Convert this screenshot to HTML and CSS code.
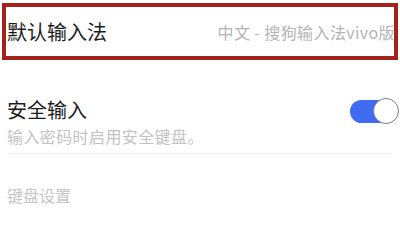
FILE: index.html
```html
<!DOCTYPE html>
<html lang="zh-CN">
<head>
<meta charset="utf-8">
<link rel="stylesheet" href="styles.css">
</head>
<body>
<div class="box">
  <span class="title">默认输入法</span>
  <span class="value">中文 - 搜狗输入法vivo版</span>
</div>
<div class="section">
  <div class="row">
    <div class="row-text">
      <div class="title">安全输入</div>
      <div class="sub">输入密码时启用安全键盘。</div>
    </div>
    <div class="toggle"><span class="knob"></span></div>
  </div>
  <div class="divider"></div>
  <div class="group">键盘设置</div>
</div>
</body>
</html>
```
FILE: styles.css
```css
html, body {
  margin: 0;
  padding: 0;
  background: #ffffff;
  font-family: "Noto Sans CJK SC", "Noto Sans", sans-serif;
  overflow: hidden;
}
.box {
  margin: 3px 2px 0;
  height: 49px;
  border: 4px solid #a3221d;
  display: flex;
  align-items: center;
  justify-content: space-between;
  padding: 0 0 0 1px;
  box-sizing: content-box;
}
.title {
  font-size: 20px;
  line-height: 24px;
  color: #1c1c1c;
}
.value {
  font-size: 16px;
  line-height: 20px;
  letter-spacing: 0.4px;
  color: #b4b4b4;
  margin-right: -1px;
  white-space: nowrap;
}
.section {
  padding: 0 8px 0 7px;
}
.row {
  display: flex;
  justify-content: space-between;
  align-items: center;
  margin-top: 38px;
}
.sub {
  font-size: 16px;
  line-height: 20px;
  letter-spacing: 0.4px;
  color: #c3c3c3;
  margin-top: 4px;
}
.toggle {
  width: 48px;
  height: 23px;
  border-radius: 12px;
  background: #3e6bf0;
  display: flex;
  align-items: center;
  justify-content: flex-end;
  margin-right: -6px;
  margin-top: -22px;
}
.knob {
  width: 24px;
  height: 24px;
  border-radius: 50%;
  background: #ffffff;
  border: 1px solid #7a7f8a;
  margin-right: -1px;
}
.divider {
  height: 1px;
  background: #f0f0f0;
  margin: 7px 0 0 1px;
}
.group {
  font-size: 16px;
  line-height: 20px;
  color: #c6c6c6;
  margin-top: 31px;
}
```
